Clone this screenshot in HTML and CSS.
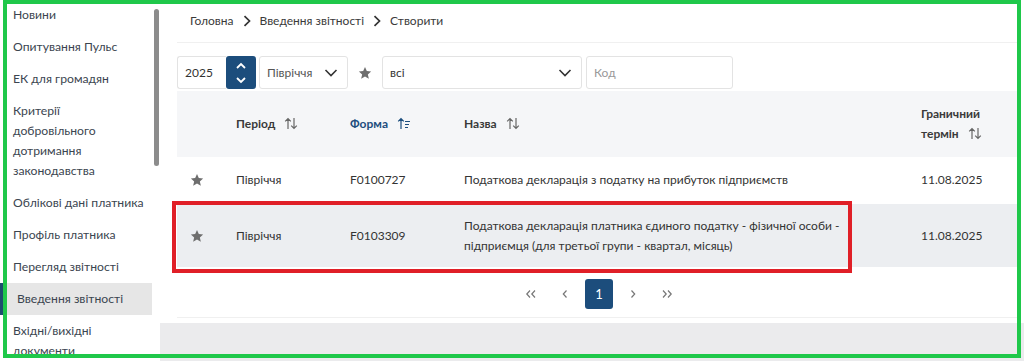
FILE: index.html
```html
<!DOCTYPE html>
<html lang="uk">
<head>
    <meta charset="UTF-8">
    <title>Введення звітності</title>
    <link rel="stylesheet" href="styles.css">
</head>
<body>
<div class="page">
    <aside class="sidebar">
        <ul class="menu">
            <li>Новини</li>
            <li>Опитування Пульс</li>
            <li>ЕК для громадян</li>
            <li>Критерії добровільного дотримання законодавства</li>
            <li>Облікові дані платника</li>
            <li>Профіль платника</li>
            <li>Перегляд звітності</li>
            <li class="active">Введення звітності</li>
            <li>Вхідні/вихідні документи</li>
        </ul>
        <div class="scroll"></div>
    </aside>

    <main class="content">
        <div class="inner">
            <div class="crumbs">
                <span>Головна</span>
                <svg class="sep" width="10" height="12" viewBox="0 0 10 12"><polyline points="2.5,1.2 7.5,6 2.5,10.8" fill="none" stroke="#333" stroke-width="1.7"/></svg>
                <span>Введення звітності</span>
                <svg class="sep" width="10" height="12" viewBox="0 0 10 12"><polyline points="2.5,1.2 7.5,6 2.5,10.8" fill="none" stroke="#333" stroke-width="1.7"/></svg>
                <span>Створити</span>
            </div>

            <div class="filters">
                <div class="year">2025</div>
                <div class="spin">
                    <svg width="12" height="26" viewBox="0 0 12 26"><polyline points="2,8 6,4 10,8" fill="none" stroke="#fff" stroke-width="1.8"/><polyline points="2,18 6,22 10,18" fill="none" stroke="#fff" stroke-width="1.8"/></svg>
                </div>
                <div class="select period">Півріччя
                    <svg class="chev" width="14" height="10" viewBox="0 0 14 10"><polyline points="1.5,2 7,7.5 12.5,2" fill="none" stroke="#333" stroke-width="1.6"/></svg>
                </div>
                <div class="fav">
                    <svg width="14" height="14" viewBox="0 0 24 24"><path d="M12 1.8l3.1 6.9 7.4.7-5.6 5 1.7 7.4L12 17.9l-6.6 3.9 1.7-7.4-5.6-5 7.4-.7z" fill="#6e6e6e"/></svg>
                </div>
                <div class="select all">всі
                    <svg class="chev" width="14" height="10" viewBox="0 0 14 10"><polyline points="1.5,2 7,7.5 12.5,2" fill="none" stroke="#333" stroke-width="1.6"/></svg>
                </div>
                <div class="code">Код</div>
            </div>

            <div class="row head">
                <div class="cell"></div>
                <div class="cell">Період <svg class="sort" width="14" height="13" viewBox="0 0 14 13"><path d="M4 12V1.5M1.2 4.3L4 1.5l2.8 2.8M10 1v10.5M7.2 8.7L10 11.5l2.8-2.8" fill="none" stroke="#666" stroke-width="1.2"/></svg></div>
                <div class="cell sorted">Форма <svg class="sort" width="14" height="13" viewBox="0 0 14 13"><path d="M4 12V1.5M1.2 4.3L4 1.5l2.8 2.8M8 4.5h5M8 7.5h4M8 10.5h3" fill="none" stroke="#1d4e7e" stroke-width="1.2"/></svg></div>
                <div class="cell">Назва <svg class="sort" width="14" height="13" viewBox="0 0 14 13"><path d="M4 12V1.5M1.2 4.3L4 1.5l2.8 2.8M10 1v10.5M7.2 8.7L10 11.5l2.8-2.8" fill="none" stroke="#666" stroke-width="1.2"/></svg></div>
                <div class="cell">Граничний<br>термін <svg class="sort" width="14" height="13" viewBox="0 0 14 13"><path d="M4 12V1.5M1.2 4.3L4 1.5l2.8 2.8M10 1v10.5M7.2 8.7L10 11.5l2.8-2.8" fill="none" stroke="#666" stroke-width="1.2"/></svg></div>
            </div>

            <div class="row">
                <div class="cell star"><svg width="14" height="14" viewBox="0 0 24 24"><path d="M12 1.8l3.1 6.9 7.4.7-5.6 5 1.7 7.4L12 17.9l-6.6 3.9 1.7-7.4-5.6-5 7.4-.7z" fill="#6e6e6e"/></svg></div>
                <div class="cell">Півріччя</div>
                <div class="cell">F0100727</div>
                <div class="cell name">Податкова декларація з податку на прибуток підприємств</div>
                <div class="cell">11.08.2025</div>
            </div>

            <div class="row odd">
                <div class="cell star"><svg width="14" height="14" viewBox="0 0 24 24"><path d="M12 1.8l3.1 6.9 7.4.7-5.6 5 1.7 7.4L12 17.9l-6.6 3.9 1.7-7.4-5.6-5 7.4-.7z" fill="#6e6e6e"/></svg></div>
                <div class="cell">Півріччя</div>
                <div class="cell">F0103309</div>
                <div class="cell name">Податкова декларація платника єдиного податку - фізичної особи - підприємця (для третьої групи - квартал, місяць)</div>
                <div class="cell">11.08.2025</div>
            </div>

            <div class="pager">
                <span class="pg"><svg width="12" height="10" viewBox="0 0 12 10"><path d="M5 1.5L1.8 5 5 8.5M10 1.5L6.8 5 10 8.5" fill="none" stroke="#777" stroke-width="1.2"/></svg></span>
                <span class="pg"><svg width="8" height="10" viewBox="0 0 8 10"><path d="M5.5 1.5L2.3 5l3.2 3.5" fill="none" stroke="#777" stroke-width="1.2"/></svg></span>
                <span class="pg current">1</span>
                <span class="pg"><svg width="8" height="10" viewBox="0 0 8 10"><path d="M2.5 1.5L5.7 5 2.5 8.5" fill="none" stroke="#777" stroke-width="1.2"/></svg></span>
                <span class="pg"><svg width="12" height="10" viewBox="0 0 12 10"><path d="M2 1.5L5.2 5 2 8.5M7 1.5L10.2 5 7 8.5" fill="none" stroke="#777" stroke-width="1.2"/></svg></span>
            </div>
        </div>
        <div class="band"></div>
    </main>
</div>

<!-- annotation overlays -->
<div class="mark"></div>
<div class="frame"></div>
</body>
</html>
```

FILE: styles.css
```css
*{
    margin: 0;
    padding: 0;
    list-style: none;
    box-sizing: border-box;
}
body{
    width: 1024px;
    height: 361px;
    overflow: hidden;
    background: #fff;
    font-family: Lato, "Open Sans", "Noto Sans", sans-serif;
    font-size: 12px;
    color: #333;
    position: relative;
}
.page{
    display: flex;
    height: 361px;
}

/* sidebar */
.sidebar{
    width: 160px;
    flex: none;
    position: relative;
    overflow: hidden;
}
.menu{
    margin-top: -1px;
    width: 152px;
}
.menu li{
    padding: 6px 8px 6px 13px;
    line-height: 20px;
    font-size: 12.2px;
    color: #3b4550;
}
.menu li.active{
    background: #e6e6e6;
    border-left: 3px solid #1d4e6e;
    padding-left: 14px;
}
.scroll{
    position: absolute;
    left: 154px;
    top: 9px;
    width: 5px;
    height: 157px;
    border-radius: 3px;
    background: #8c8c8c;
}

/* content */
.content{
    flex: 1;
    display: flex;
    flex-direction: column;
}
.inner{
    padding: 0 3px 0 17px;
}
.crumbs{
    height: 43px;
    border-bottom: 1px solid #f0f0f0;
    display: flex;
    align-items: center;
    gap: 8px;
    padding-left: 13px;
    padding-bottom: 1px;
    color: #3a3a3a;
}

.filters{
    display: flex;
    align-items: center;
    height: 33px;
    margin-top: 13px;
}
.year, .select, .code{
    height: 33px;
    border: 1px solid #e3e3e3;
    border-radius: 3px;
    display: flex;
    align-items: center;
    padding-left: 7px;
}
.year{
    width: 49px;
    border-right: none;
    border-radius: 3px 0 0 3px;
}
.spin{
    width: 30px;
    height: 33px;
    background: #1c4d7c;
    border-radius: 3px;
    display: flex;
    align-items: center;
    justify-content: center;
}
.select{
    justify-content: space-between;
    padding-right: 9px;
}
.select.period{
    width: 89px;
    margin-left: 3px;
    color: #555;
}
.fav{
    width: 34px;
    display: flex;
    justify-content: center;
}
.select.all{
    width: 200px;
}
.code{
    width: 147px;
    margin-left: 4px;
    color: #999;
}

/* table */
.row{
    display: grid;
    grid-template-columns: 48px 114px 114px 457px 1fr;
    align-items: center;
    min-height: 46px;
}
.row .cell{
    padding-left: 11px;
    line-height: 20px;
}
.row .name{
    padding-right: 36px;
}
.row.head{
    margin-top: 2px;
    height: 66px;
    background: #f5f6f8;
    font-weight: bold;
    color: #3a3a3a;
}
.row.head .sorted{
    color: #1d4e7e;
}
.sort{
    vertical-align: -2px;
    margin-left: 6px;
}
.row .star{
    padding-left: 13px;
    display: flex;
}
.row.odd{
    background: #eceef1;
    min-height: 63px;
    margin-top: 1px;
}

.pager{
    display: flex;
    justify-content: center;
    gap: 6px;
    padding: 12px 0 8px;
    border-bottom: 1px solid #f0f0f0;
}
.pg{
    width: 28px;
    height: 30px;
    display: flex;
    align-items: center;
    justify-content: center;
}
.pg.current{
    background: #1c4d7c;
    color: #fff;
    border-radius: 3px;
    font-size: 13px;
}

.band{
    margin-top: 5px;
    flex: 1;
    background: #ebebed;
}

/* annotation overlays */
.mark{
    position: absolute;
    left: 172px;
    top: 201px;
    width: 680px;
    height: 72px;
    border: 4px solid #e01f27;
}
.frame{
    position: absolute;
    left: 3px;
    top: 0;
    width: 1018px;
    height: 358px;
    border: 4px solid #1fc84a;
}
```
